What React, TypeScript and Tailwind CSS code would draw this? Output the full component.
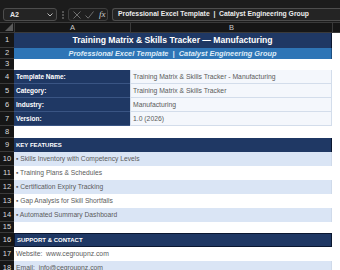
import React from "react";

const RowNum = ({ n }: { n: number }) => (
  <div className="w-[14px] shrink-0 h-full flex items-center justify-center border-b border-[#3a3a3a] bg-[#161616] text-[7.5px] text-[#dcdcdc] leading-none">
    {n}
  </div>
);

const CellC = () => <div className="flex-1 h-full bg-white" />;

export default function App() {
  return (
    <div className="w-[340px] h-[270px] overflow-hidden bg-[#1c1c1c] font-['Liberation_Sans',sans-serif]">
      {/* formula bar */}
      <div className="h-[23px] flex items-start pt-[8px] pl-[3px] border-b border-[#3a3a3a]">
        <div className="w-[54px] h-[13px] rounded-[3px] border border-[#4d4d4d] bg-[#242424] flex items-center justify-between pl-[6px] pr-[3px]">
          <span className="text-[7px] font-bold text-[#e6e6e6] leading-none">A2</span>
          <svg width="6" height="4" viewBox="0 0 6 4" fill="none">
            <path d="M0.5 0.5 L3 3 L5.5 0.5" stroke="#bdbdbd" strokeWidth="1" />
          </svg>
        </div>
        <div className="w-[11px] h-[13px] flex items-center justify-center">
          <svg width="2" height="8" viewBox="0 0 2 8">
            <circle cx="1" cy="1" r="0.8" fill="#9a9a9a" />
            <circle cx="1" cy="4" r="0.8" fill="#9a9a9a" />
            <circle cx="1" cy="7" r="0.8" fill="#9a9a9a" />
          </svg>
        </div>
        <div className="w-[40px] h-[13px] rounded-[3px] border border-[#3f3f3f] bg-[#1f1f1f] flex items-center pl-[4px] gap-[4px]">
          <svg width="8" height="8" viewBox="0 0 8 8">
            <path d="M0.5 0.5 L7.5 7.5 M7.5 0.5 L0.5 7.5" stroke="#6e6e6e" strokeWidth="1" />
          </svg>
          <svg width="9" height="8" viewBox="0 0 9 8">
            <path d="M0.5 4.5 L3.2 7.2 L8.5 0.5" stroke="#6e6e6e" strokeWidth="1" fill="none" />
          </svg>
          <span className="font-['Liberation_Serif',serif] italic text-[9px] text-[#d0d0d0] leading-none ml-[1px]">fx</span>
        </div>
        <div className="ml-[4px] flex-1 h-[13px] rounded-l-[3px] border border-r-0 border-[#4d4d4d] bg-[#242424] flex items-center pl-[5px]">
          <span className="text-[6.8px] font-bold text-[#ececec] leading-none whitespace-pre">
            Professional Excel Template  |  Catalyst Engineering Group
          </span>
        </div>
      </div>

      {/* column headers */}
      <div className="h-[10px] flex bg-[#161616] border-b border-[#3a3a3a]">
        <div className="w-[14px] h-full relative">
          <svg className="absolute right-[1px] bottom-[1px]" width="8" height="8" viewBox="0 0 8 8">
            <path d="M8 0 L8 8 L0 8 Z" fill="#5a5a5a" />
          </svg>
        </div>
        <div className="w-[116px] h-full border-l border-[#3a3a3a] flex items-center justify-center text-[7.5px] text-[#c8c8c8] leading-none">
          A
        </div>
        <div className="w-[202px] h-full border-l border-[#3a3a3a] flex items-center justify-center text-[7.5px] text-[#c8c8c8] leading-none">
          B
        </div>
        <div className="flex-1 h-full border-l border-[#3a3a3a]" />
      </div>

      {/* row 1 */}
      <div className="h-[15px] flex">
        <RowNum n={1} />
        <div className="w-[318px] h-full bg-[#1f3864] border-r border-[#0b1730] flex items-center justify-center">
          <span className="text-[8.6px] font-bold text-white leading-none">
            Training Matrix &amp; Skills Tracker — Manufacturing
          </span>
        </div>
        <CellC />
      </div>
      {/* row 2 */}
      <div className="h-[11px] flex">
        <RowNum n={2} />
        <div className="w-[318px] h-full bg-[#2e75b6] border-r border-[#1d4f80] flex items-center justify-center">
          <span className="text-[7.4px] font-bold italic text-[#deebf7] leading-none whitespace-pre">
            Professional Excel Template  |  Catalyst Engineering Group
          </span>
        </div>
        <CellC />
      </div>
      {/* row 3 */}
      <div className="h-[11px] flex">
        <RowNum n={3} />
        <div className="w-[318px] h-full bg-white" />
        <CellC />
      </div>

      {[
        [4, "Template Name:", "Training Matrix & Skills Tracker - Manufacturing"],
        [5, "Category:", "Training Matrix & Skills Tracker"],
        [6, "Industry:", "Manufacturing"],
        [7, "Version:", "1.0 (2026)"],
      ].map(([n, label, value]) => (
        <div key={n as number} className="h-[14px] flex">
          <RowNum n={n as number} />
          <div className="w-[116px] h-full bg-[#1f3864] border-b border-[#3a5584] flex items-center pl-[2px] pt-[2px]">
            <span className="text-[6.5px] font-bold text-white leading-none">{label}</span>
          </div>
          <div className="w-[202px] h-full bg-[#f4f7fc] border-l border-b border-r border-[#d3ddeb] flex items-center pl-[2px] pt-[1px]">
            <span className="text-[6.8px] text-[#5b5b5b] leading-none">{value}</span>
          </div>
          <CellC />
        </div>
      ))}

      {/* row 8 */}
      <div className="h-[12px] flex">
        <RowNum n={8} />
        <div className="w-[318px] h-full bg-white" />
        <CellC />
      </div>

      {/* row 9 */}
      <div className="h-[14px] flex">
        <RowNum n={9} />
        <div className="w-[318px] h-full bg-[#1f3864] border-r border-[#0b1730] flex items-center pl-[2px]">
          <span className="text-[6px] font-bold text-white leading-none">KEY FEATURES</span>
        </div>
        <CellC />
      </div>

      {[
        [10, "Skills Inventory with Competency Levels", true],
        [11, "Training Plans & Schedules", false],
        [12, "Certification Expiry Tracking", true],
        [13, "Gap Analysis for Skill Shortfalls", false],
        [14, "Automated Summary Dashboard", true],
      ].map(([n, text, shade]) => (
        <div key={n as number} className="h-[14px] flex">
          <RowNum n={n as number} />
          <div
            className={
              shade
                ? "w-[318px] h-full bg-[#dae5f5] border-r border-[#cfdaea] flex items-center pl-[2px]"
                : "w-[318px] h-full bg-white flex items-center pl-[2px]"
            }
          >
            <span className="text-[6.7px] text-[#5b5b5b] leading-none whitespace-pre">
              {"▪ " + (text as string)}
            </span>
          </div>
          <CellC />
        </div>
      ))}

      {/* row 15 */}
      <div className="h-[11px] flex">
        <RowNum n={15} />
        <div className="w-[318px] h-full bg-white" />
        <CellC />
      </div>

      {/* row 16 */}
      <div className="h-[14px] flex">
        <RowNum n={16} />
        <div className="w-[318px] h-full bg-[#1f3864] border border-[#0b1730] flex items-center pl-[2px]">
          <span className="text-[6px] font-bold text-white leading-none">SUPPORT &amp; CONTACT</span>
        </div>
        <CellC />
      </div>

      {/* row 17 */}
      <div className="h-[14px] flex">
        <RowNum n={17} />
        <div className="w-[318px] h-full bg-white flex items-center pl-[2px]">
          <span className="text-[6.8px] text-[#5b5b5b] leading-none whitespace-pre">Website:  www.cegroupnz.com</span>
        </div>
        <CellC />
      </div>

      {/* row 18 */}
      <div className="h-[14px] flex">
        <RowNum n={18} />
        <div className="w-[318px] h-full bg-[#dae5f5] border-r border-[#cfdaea] flex items-center pl-[2px]">
          <span className="text-[6.8px] text-[#5b5b5b] leading-none whitespace-pre">Email:  info@cegroupnz.com</span>
        </div>
        <CellC />
      </div>
    </div>
  );
}
